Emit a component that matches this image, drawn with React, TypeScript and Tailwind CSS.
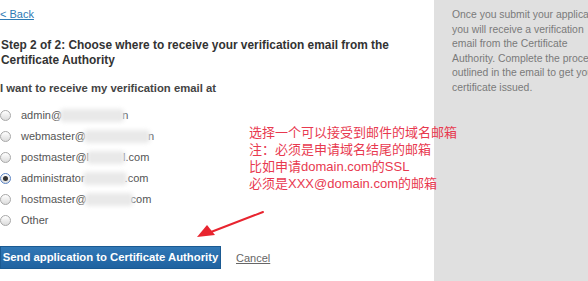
import React from 'react'

// blurred part of each address is drawn as a soft smudge
const emails = [
  { user: 'admin@', blur: 'w-[60px]', tail: 'n', checked: false },
  { user: 'webmaster@', blur: 'w-[62px]', tail: 'n', checked: false },
  { user: 'postmaster@l', blur: 'w-[34px]', tail: 'l.com', checked: false },
  { user: 'administrator', blur: 'w-[40px]', tail: '.com', checked: true },
  { user: 'hostmaster@', blur: 'w-[44px]', tail: 'com', checked: false },
]

function Radio({ checked }: { checked?: boolean }) {
  return (
    <span
      className={
        'flex h-[11px] w-[11px] shrink-0 items-center justify-center rounded-full border bg-gradient-to-b from-white to-[#dcdcdc] ' +
        (checked ? 'border-[#5b84c4]' : 'border-[#a8a8a8]')
      }
    >
      {checked && <span className="h-[5px] w-[5px] rounded-full bg-[#333]" />}
    </span>
  )
}

export default function App() {
  return (
    <div
      className="relative flex h-[281px] w-[588px] overflow-hidden bg-white"
      style={{ fontFamily: '"Liberation Sans", Arial, sans-serif' }}
    >
      {/* Main column */}
      <div className="flex w-[434px] shrink-0 flex-col">
        <a href="#" className="mt-[8px] text-[11px] leading-[13px] text-[#2d7ab5] underline">
          &lt; Back
        </a>

        <h2 className="mt-[17px] pl-[1px] text-[11.9px] font-bold leading-[15px] text-[#333]">
          Step 2 of 2: Choose where to receive your verification email from the Certificate Authority
        </h2>

        <p className="mt-[13px] text-[11.3px] font-bold leading-[14px] text-[#444]">
          I want to receive my verification email at
        </p>

        <div className="mt-[13px] flex flex-col gap-[7px]">
          {emails.map((e) => (
            <label key={e.user} className="flex h-[14px] items-center gap-[10px]">
              <Radio checked={e.checked} />
              <span className="flex items-center text-[11px] leading-[14px] text-[#555]">
                {e.user}
                <span className={'relative h-[14px] ' + e.blur}>
                  <span className="absolute inset-x-[-2px] top-[1px] h-[13px] rounded-[4px] bg-[#e9e9e9] blur-[2px]" />
                </span>
                {e.tail}
              </span>
            </label>
          ))}
          <label className="flex h-[14px] items-center gap-[10px]">
            <Radio />
            <span className="text-[11px] leading-[14px] text-[#555]">Other</span>
          </label>
        </div>

        <div className="mt-[19px] flex items-center gap-[15px]">
          <button className="h-[23px] w-[221px] whitespace-nowrap border border-[#1b5a92] bg-gradient-to-b from-[#3178b6] to-[#1f62a0] text-[11.3px] font-bold text-white">
            Send application to Certificate Authority
          </button>
          <a href="#" className="pt-[2px] text-[11px] text-[#666] underline">
            Cancel
          </a>
        </div>
      </div>

      {/* Side panel */}
      <div className="flex-1 bg-[#e0e0e0] pl-[18px] pt-[8px]">
        <p className="w-[158px] text-[10.4px] leading-[14.6px] text-[#7a7a7a]">
          Once you submit your application, you will receive a verification email from the Certificate Authority. Complete the process outlined in the email to get your certificate issued.
        </p>
      </div>

      {/* Annotation overlay */}
      <div
        className="absolute left-[249px] top-[124px] text-[13px] leading-[17px] text-[#e8394f]"
        style={{ fontFamily: '"Liberation Sans", "Noto Sans CJK SC", sans-serif' }}
      >
        <div>选择一个可以接受到邮件的域名邮箱</div>
        <div>注：必须是申请域名结尾的邮箱</div>
        <div>比如申请domain.com的SSL</div>
        <div>必须是XXX@domain.com的邮箱</div>
      </div>
      <svg className="absolute left-[195px] top-[208px]" width="80" height="35" viewBox="0 0 80 35">
        <path d="M68 4 L16 24" stroke="#e8242f" strokeWidth="2" strokeLinecap="round" />
        <path d="M2 29 L12 17 L20 27 Z" fill="#e8242f" />
      </svg>
    </div>
  )
}
